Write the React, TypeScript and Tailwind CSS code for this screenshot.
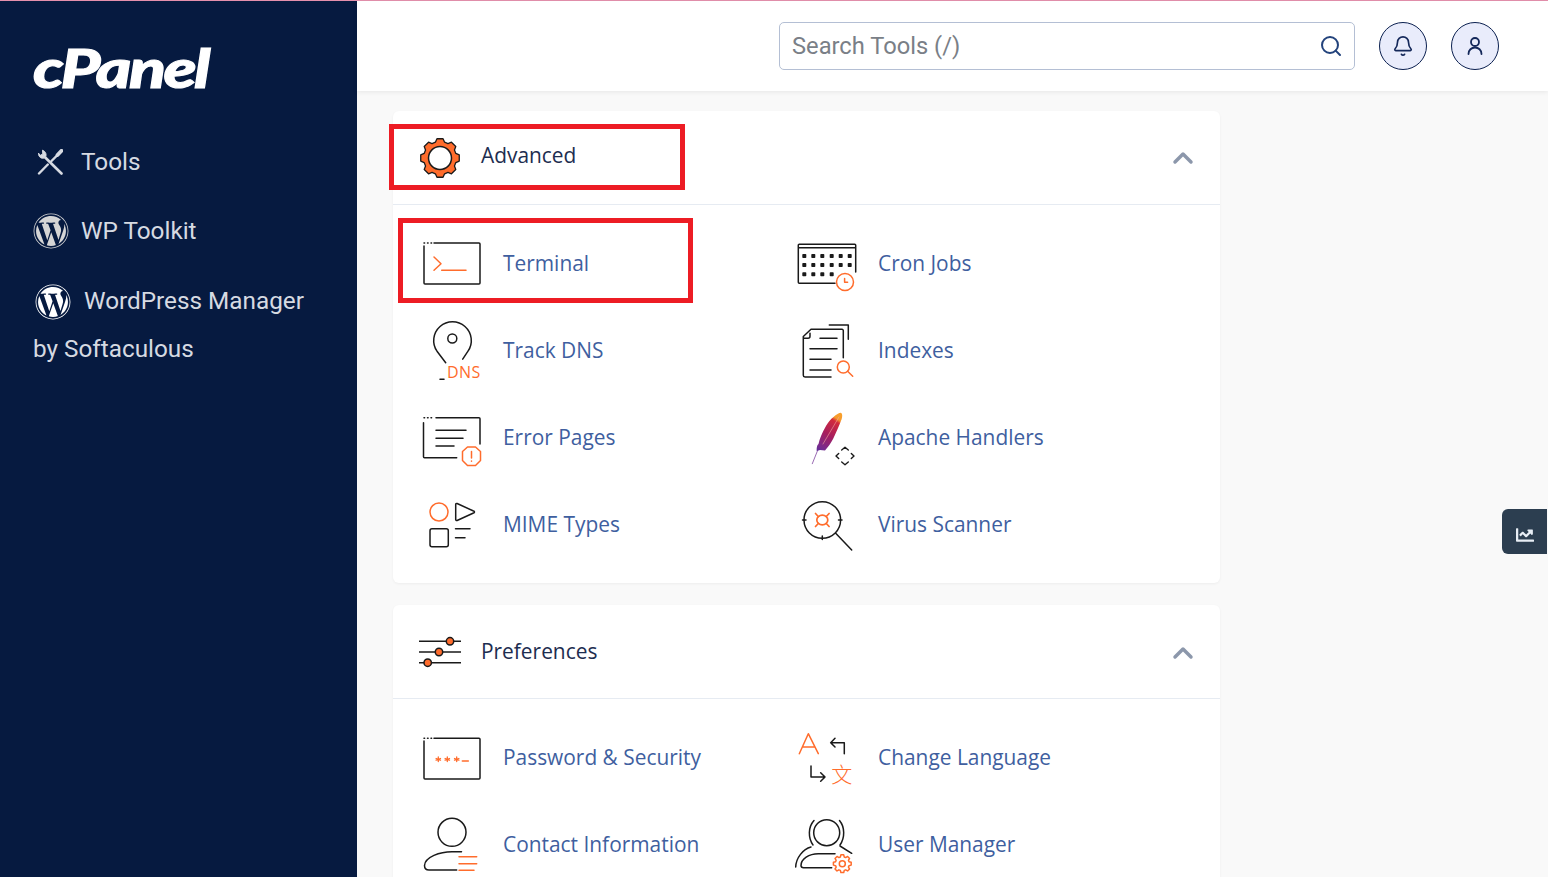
import React from 'react';
import { Search, Bell, ChevronUp } from 'lucide-react';
import { FaWordpress, FaChartLine } from 'react-icons/fa';

const ORANGE = '#ff6c2c';

const Ico = ({ children }: { children: React.ReactNode }) => (
  <svg
    viewBox="0 0 60 60"
    fill="none"
    stroke="#1a1a1a"
    strokeWidth="1.5"
    strokeLinecap="round"
    strokeLinejoin="round"
    className="w-[60px] h-[60px] shrink-0 overflow-visible"
  >
    {children}
  </svg>
);

const gearPath = (cx: number, cy: number, ro: number, ri: number, teeth: number) => {
  const pts: string[] = [];
  for (let i = 0; i < teeth; i++) {
    const step = (Math.PI * 2) / teeth;
    const a = i * step - Math.PI / 2;
    [
      [ri, -0.36],
      [ro, -0.2],
      [ro, 0.2],
      [ri, 0.36],
    ].forEach(([r, k]) => {
      const t = a + k * step;
      pts.push(`${(cx + r * Math.cos(t)).toFixed(2)} ${(cy + r * Math.sin(t)).toFixed(2)}`);
    });
  }
  return 'M' + pts.join('L') + 'Z';
};

const Dots = ({ y = 9, x = 2 }: { y?: number; x?: number }) => (
  <path d={`M${x} ${y}h.6M${x + 3.5} ${y}h.6M${x + 7} ${y}h.6`} />
);

const TerminalIcon = () => (
  <Ico>
    <Dots />
    <path d="M12 9H57a1 1 0 0 1 1 1V49a1 1 0 0 1-1 1H3a1 1 0 0 1-1-1V12" />
    <path d="M12 23l7 6.7-7 6.6M19.7 36.3H44" stroke={ORANGE} />
  </Ico>
);

const DnsIcon = () => (
  <Ico>
    <path d="M23.7 42.500L15 31A18.800 18.800 0 1 1 46 31L40.700 39" transform="translate(0 -.8)" />
    <circle cx="30.300" cy="17.500" r="4.500" />
    <path d="M18 58.300h4" />
    <text x="25" y="56.600" fill={ORANGE} stroke="none" fontSize="16" letterSpacing="0.4" fontFamily="Open Sans">
      DNS
    </text>
  </Ico>
);

const ErrorIcon = () => (
  <Ico>
    <Dots y={9.700} />
    <path d="M14 9.700H57a1 1 0 0 1 1 1V36M1.500 14.700V48.700a1 1 0 0 0 1 1H34.700M14 22.300H44M14 30.300H41M14 38H32" />
    <path d="M45.500 39h8l5 4.500v9l-5 5h-8l-5-5v-9z" stroke={ORANGE} />
    <path d="M49.500 43.500v6.500M49.500 53v.3" stroke={ORANGE} />
  </Ico>
);

const MimeIcon = () => (
  <Ico>
    <circle cx="17" cy="17" r="9" stroke={ORANGE} />
    <path d="M33.700 9.500a1 1 0 0 1 1.400-1L51.500 16a1 1 0 0 1 0 2L35.100 25.500a1 1 0 0 1-1.400-1z" />
    <rect x="8" y="33.700" width="18.300" height="18" rx="2" />
    <path d="M33.500 33.700H48M33.500 42.700H43" />
  </Ico>
);

const CronIcon = () => {
  const rows = [22, 31, 40.3];
  const cols = [7.3, 16.3, 25.3, 34.7, 43.7, 52.7];
  return (
    <Ico>
      <path d="M38 49.300H2.300a1 1 0 0 1-1-1V11.300a1 1 0 0 1 1-1H57.700a1 1 0 0 1 1 1V38M1.300 13.700H58.700" />
      {rows.map((y, r) =>
        cols.slice(0, r === 2 ? 4 : 6).map((x) => (
          <rect key={`${x}-${y}`} x={x - 2} y={y - 2} width="4" height="4" rx="0.8" fill="#1a1a1a" stroke="none" />
        )),
      )}
      <circle cx="48" cy="48" r="8.500" stroke={ORANGE} />
      <path d="M47.600 44.500v3.700h3" stroke={ORANGE} />
    </Ico>
  );
};

const IndexesIcon = () => (
  <Ico>
    <path d="M14 8.300H45a1.300 1.300 0 0 1 1.300 1.300V36.700M34 56H8a1.700 1.700 0 0 1-1.700-1.700V15.500L14 8.300M6.300 17.300H11a2 2 0 0 0 2-2v-3" />
    <path d="M32.300 4H51.300V18.300M23 17.300H40M13 27.700H40M13 38.300H34M13 49H34" />
    <circle cx="46.300" cy="46" r="6" stroke={ORANGE} />
    <path d="M50.600 50.300L55.700 55.300" stroke={ORANGE} />
  </Ico>
);

const ApacheIcon = () => (
  <Ico>
    <defs>
      <linearGradient id="feather" x1="44" y1="5" x2="20" y2="44" gradientUnits="userSpaceOnUse">
        <stop offset="0" stopColor="#f9a12c" />
        <stop offset="0.15" stopColor="#f59a2c" />
        <stop offset="0.22" stopColor="#d22a3c" />
        <stop offset="0.55" stopColor="#a61e5e" />
        <stop offset="0.85" stopColor="#7a2a8c" />
        <stop offset="1" stopColor="#5a2f9a" />
      </linearGradient>
    </defs>
    <path d="M15.300 55.700L24 34" stroke="#9a6bb4" strokeWidth="1" />
    <path
      d="M44 4.700C40 5 33 11 29 18C25 25 22.500 31 21.500 36C20 37 19.500 40 19.700 43L23 42L28 42.500C31 39 34 35 36.300 30.500C39 25 42 18 44.700 11C45.500 8 45.500 5.500 44 4.700Z"
      fill="url(#feather)"
      stroke="none"
    />
    <path d="M42 9L26 36" stroke="#f2a6a0" strokeWidth="0.6" />
    <path d="M44.700 42l3.300-2.700 3.300 2.700M44.700 54l3.300 2.700 3.300-2.700M41.700 45.500l-2.700 2.500 2.700 2.500M54.300 45.500l2.700 2.500-2.700 2.500" strokeWidth="1.400" />
  </Ico>
);

const VirusIcon = () => (
  <Ico>
    <circle cx="25.300" cy="25" r="18.300" />
    <path d="M38.700 38.300L54.700 55M5.500 25h3.500M41.500 25h3.500M25.300 41v3.500" />
    <ellipse cx="25.300" cy="25" rx="5.500" ry="4.800" stroke={ORANGE} strokeWidth="1.700" />
    <path d="M21.300 21.500L18.500 18.500M29.300 21.500L32.100 18.500M21.300 28.500L18.500 31.500M29.300 28.500L32.100 31.500" stroke={ORANGE} strokeWidth="1.700" />
  </Ico>
);

const PasswordIcon = () => (
  <Ico>
    <Dots y={10.300} />
    <path d="M12 10.300H57a1 1 0 0 1 1 1V50a1 1 0 0 1-1 1H3a1 1 0 0 1-1-1V13" />
    {[16.3, 25.3, 34.7].map((x) => (
      <path key={x} d={`M${x} 29v4.600M${x - 2.200} 30.500l4.400 1.700M${x + 2.200} 30.500l-4.400 1.700`} stroke={ORANGE} strokeWidth="1.300" />
    ))}
    <path d="M40.300 33H46.300" stroke={ORANGE} />
  </Ico>
);

const ContactIcon = () => (
  <Ico>
    <circle cx="30" cy="17.300" r="14" />
    <path d="M39.500 36.700H30C18 36.700 3 42 2.500 50.500C2.500 53 4 55 7 55H34.700" />
    <path d="M37 41.700H54.700M37 48.700H54.700M37 55.300H52" stroke={ORANGE} />
  </Ico>
);

const LanguageIcon = () => (
  <Ico>
    <path d="M2.300 25.700L11.300 5.700L21.300 25.700M5.500 19H18" stroke={ORANGE} />
    <path d="M47.300 25.700V14.700H33.700M38 10.300L33.700 14.700L38 19M14 38V49H28M23.700 44.700L28 49L23.700 53.300" />
    <text
      x="44.700"
      y="54"
      textAnchor="middle"
      fill={ORANGE}
      stroke="none"
      fontSize="21"
      fontWeight="300"
      fontFamily="Noto Sans CJK SC"
    >
      文
    </text>
  </Ico>
);

const UserManagerIcon = () => (
  <Ico>
    <circle cx="29.700" cy="17.700" r="13" />
    <path d="M17 5.500C11 12 11 23 16 30M42.500 5.500C48 12 48 23 43 30" />
    <path d="M-1.300 52C-1 43 6 34 14 32M43 31L54.700 38.300" />
    <path d="M38 38.700H21.300C12 38.700 4 44 4 50.500C4 52 5 52.700 6.500 52.700H34.700" />
    <path d={gearPath(45.300, 48.700, 9, 7, 8)} stroke={ORANGE} />
    <circle cx="45.300" cy="48.700" r="3" stroke={ORANGE} />
  </Ico>
);

const GearIcon = () => (
  <svg viewBox="0 0 44 44" className="w-[44px] h-[44px] shrink-0">
    <path d={gearPath(22, 22, 19.500, 16.500, 8)} fill={ORANGE} stroke="#1a1a1a" strokeWidth="1.300" strokeLinejoin="round" />
    <circle cx="22" cy="22" r="11.500" fill="#fff" stroke="#1a1a1a" strokeWidth="1.500" />
  </svg>
);

const SlidersIcon = () => (
  <svg viewBox="0 0 44 44" stroke="#1a1a1a" strokeWidth="1.500" className="w-[44px] h-[44px] shrink-0">
    <path d="M1 11.300H43M1 22H43M1 32.700H43" />
    <circle cx="32" cy="11.300" r="3.700" fill={ORANGE} />
    <circle cx="21" cy="22" r="3.700" fill={ORANGE} />
    <circle cx="9.700" cy="32.700" r="3.700" fill={ORANGE} />
  </svg>
);

const ToolsIcon = () => (
  <svg viewBox="0 0 26 26" fill="none" stroke="#d6dae2" strokeLinecap="round" strokeLinejoin="round" className="w-[26px] h-[26px]">
    <path d="M1.500 4.500C1.200 8 4.800 10.500 8.200 8.600C10 6 9 2.500 5.500 1.200L5.800 5L3.500 6.200Z" fill="#d6dae2" strokeWidth="1" />
    <path d="M8.500 8.800L24.500 24.500" strokeWidth="2.600" />
    <path d="M24.500 1.800L20.500 6" strokeWidth="3.800" />
    <path d="M20.500 6L14.500 12M10.800 15.500L2 24.500" strokeWidth="2.400" />
  </svg>
);

const UserIcon = () => (
  <svg viewBox="0 0 24 24" fill="none" stroke="#14285a" strokeWidth="1.800" strokeLinecap="round" className="w-[24px] h-[24px]">
    <circle cx="12" cy="8" r="4" />
    <path d="M5.500 20c0-4 3-6.500 6.500-6.500s6.500 2.500 6.500 6.500" />
  </svg>
);

type Tool = { label: string; icon: React.ReactNode; marked?: boolean };

const Row = ({ label, icon, marked }: Tool) => (
  <div className="relative flex items-center h-[87px] pl-[29px] gap-[21px]">
    {icon}
    <span className="text-[20.9px] text-[#3f5f9f]">{label}</span>
    {marked && <div className="absolute left-[5px] -top-[2px] w-[295px] h-[85px] border-[5px] border-[#ed1c24]" />}
  </div>
);

const Section = ({
  title,
  icon,
  marked,
  tools,
}: {
  title: string;
  icon: React.ReactNode;
  marked?: boolean;
  tools: Tool[];
}) => (
  <section className="w-[827px] shrink-0 bg-white rounded-md shadow-[0_1px_3px_rgba(0,0,0,0.05)]">
    <header className="relative flex items-center h-[94px] pl-[25px] pr-[21px] border-b border-[#e6ebf2]">
      {icon}
      <h2 className={marked ? 'ml-[19px] text-[20.9px] text-[#1d2d50] -translate-y-[2px]' : 'ml-[19px] text-[20.9px] text-[#1d2d50]'}>
        {title}
      </h2>
      <ChevronUp size={32} strokeWidth={2.6} className={marked ? 'ml-auto text-[#8c97ab]' : 'ml-auto text-[#8c97ab] translate-y-[1px]'} />
      {marked && <div className="absolute -left-[4px] top-[13px] w-[296px] h-[66px] border-[5px] border-[#ed1c24]" />}
    </header>
    <div className="grid grid-cols-[375px_375px] pt-[15px] pb-[15px]">
      {tools.map((t) => (
        <Row key={t.label} {...t} />
      ))}
    </div>
  </section>
);

const advanced: Tool[] = [
  { label: 'Terminal', icon: <TerminalIcon />, marked: true },
  { label: 'Cron Jobs', icon: <CronIcon /> },
  { label: 'Track DNS', icon: <DnsIcon /> },
  { label: 'Indexes', icon: <IndexesIcon /> },
  { label: 'Error Pages', icon: <ErrorIcon /> },
  { label: 'Apache Handlers', icon: <ApacheIcon /> },
  { label: 'MIME Types', icon: <MimeIcon /> },
  { label: 'Virus Scanner', icon: <VirusIcon /> },
];

const preferences: Tool[] = [
  { label: 'Password & Security', icon: <PasswordIcon /> },
  { label: 'Change Language', icon: <LanguageIcon /> },
  { label: 'Contact Information', icon: <ContactIcon /> },
  { label: 'User Manager', icon: <UserManagerIcon /> },
];

export default function App() {
  return (
    <div className="relative h-[877px] overflow-hidden flex flex-col bg-[#f9f9f9] font-['Open_Sans',sans-serif]">
      <div className="h-px shrink-0 bg-[#e590ad]" />
      <div className="flex flex-1 min-h-0">
        <aside className="w-[357px] shrink-0 bg-[#061a40] text-[#d6dae2] font-['Roboto',sans-serif] text-[24.3px]">
          <div className="pl-[33px] pt-[39px] h-[126px]">
            <span className="inline-block origin-left scale-x-[1.28] text-white text-[53px] leading-[56px] font-['Lato',sans-serif] font-black italic tracking-[-2px] [-webkit-text-stroke:1px_white]">
              cPanel
            </span>
          </div>
          <div className="flex items-center h-[70px] pl-[37px] gap-[18px]">
            <ToolsIcon />
            <span>Tools</span>
          </div>
          <div className="flex items-center h-[68px] pl-[33px] gap-[12px]">
            <FaWordpress size={36} className="text-[#d5d5d5]" />
            <span>WP Toolkit</span>
          </div>
          <p className="pl-[33px] pr-[50px] pt-[12px] leading-[48px]">
            <FaWordpress size={36} className="inline align-middle text-white ml-[2px] mr-[13px] -translate-y-[1px]" />
            <span>WordPress Manager by Softaculous</span>
          </p>
        </aside>
        <div className="flex-1 min-w-0 flex flex-col">
          <header className="h-[90px] shrink-0 bg-white shadow-[0_1px_5px_rgba(0,0,0,0.08)] flex items-center justify-end pr-[49px] font-['Roboto',sans-serif]">
            <div className="w-[576px] h-[48px] flex items-center justify-between pl-[12px] pr-[11px] border border-[#b4bfd4] rounded-[5px]">
              <span className="text-[23.7px] text-[#7a7f87] translate-y-[1px]">Search Tools (/)</span>
              <Search size={24} strokeWidth={2} className="text-[#23437c]" />
            </div>
            <button className="ml-[24px] w-[48px] h-[48px] rounded-full border border-[#0b2050] bg-[#e9ecfb] flex items-center justify-center">
              <Bell size={22} strokeWidth={1.8} className="text-[#14285a]" />
            </button>
            <button className="ml-[24px] w-[48px] h-[48px] rounded-full border border-[#0b2050] bg-[#e9ecfb] flex items-center justify-center">
              <UserIcon />
            </button>
          </header>
          <main className="flex-1 min-h-0 flex flex-col gap-[22px] pl-[36px] pt-[20px]">
            <Section title="Advanced" icon={<GearIcon />} marked tools={advanced} />
            <Section title="Preferences" icon={<SlidersIcon />} tools={preferences} />
          </main>
        </div>
      </div>
      <div className="absolute right-[1px] top-[509px] w-[45px] h-[45px] bg-[#2c3e50] rounded-l-md flex items-center justify-center">
        <FaChartLine size={18} className="text-[#e8eef5] translate-y-[3px]" />
      </div>
    </div>
  );
}
